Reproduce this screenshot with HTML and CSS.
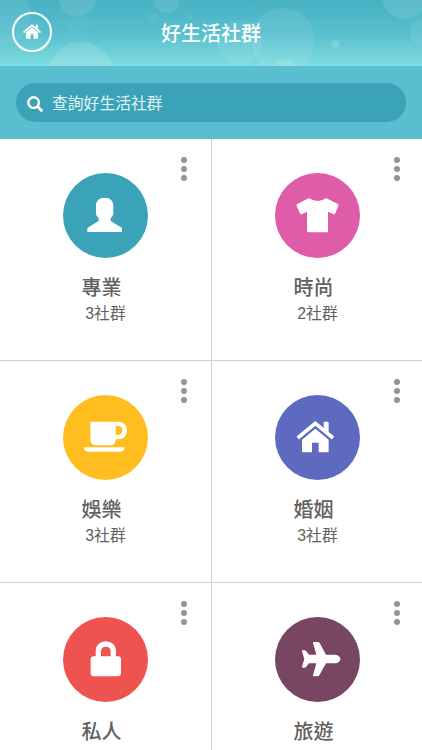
FILE: index.html
```html
<!DOCTYPE html>
<html lang="zh-Hant">
<head>
    <meta charset="UTF-8">
    <meta name="viewport" content="width=device-width, initial-scale=1.0">
    <title>好生活社群</title>
    <link rel="stylesheet" href="styles.css">
</head>
<body>
    <header class="header">
        <svg class="bubbles" viewBox="0 0 422 66" fill="#fff">
            <circle cx="0" cy="15" r="31" opacity=".07"/>
            <circle cx="77" cy="-3" r="19" opacity=".1"/>
            <circle cx="78" cy="27" r="11" opacity=".03"/>
            <circle cx="81" cy="75" r="33" opacity=".13"/>
            <circle cx="167" cy="0" r="13" opacity=".1"/>
            <circle cx="154" cy="18" r="5" opacity=".06"/>
            <circle cx="190" cy="17" r="2.5" opacity=".08"/>
            <circle cx="240" cy="42" r="22.5" opacity=".08"/>
            <circle cx="283" cy="40" r="32" opacity=".08"/>
            <circle cx="285" cy="71" r="12" opacity=".1"/>
            <circle cx="335" cy="44" r="4" opacity=".15"/>
            <circle cx="405" cy="-4" r="23" opacity=".11"/>
            <circle cx="424" cy="32" r="14" opacity=".08"/>
        </svg>
        <a class="home-button" href="#" aria-label="首頁">
            <svg class="home-icon" viewBox="62 76 118 98">
                <path d="M69 128L121 84L173 128" fill="none" stroke="#fff" stroke-width="12" stroke-linecap="round"/>
                <path d="M146 80h15v32l-15-12zM121 98l40 34v37q0 3-3 3h-27v-29h-20v29h-27q-3 0-3-3v-37z" fill="#fff"/>
            </svg>
        </a>
        <h1 class="title">好生活社群</h1>
    </header>

    <div class="search">
        <label class="search-box">
            <svg class="search-icon" viewBox="0 0 16 16" fill="none" stroke="#fff">
                <circle cx="6.6" cy="6.6" r="5.3" stroke-width="2.4"/>
                <path d="M10.600 10.600l3.800 3.800" stroke-width="2.8" stroke-linecap="round"/>
            </svg>
            <span class="search-text">查詢好生活社群</span>
        </label>
    </div>

    <main class="grid">
        <section class="card">
            <div class="menu"><i></i><i></i><i></i></div>
            <svg class="icon teal" viewBox="0 0 255 255" fill="#fff">
                <path d="M125 74c17 0 26 10 26 24v23c0 6-3 10-8 14v9l33 20q1 1 1 3v10H73v-10q0-2 1-3l33-20v-9c-5-4-8-8-8-14V98c0-14 9-24 26-24z"/>
            </svg>
            <h2 class="name">專業</h2>
            <p class="count">3社群</p>
        </section>
        <section class="card">
            <div class="menu"><i></i><i></i><i></i></div>
            <svg class="icon pink" viewBox="0 0 255 255" fill="#fff">
                <path d="M102 75q12 9 26 9t25-9l34 17q5 3 3 7l-9 22q-2 4-6 2l-16-7v58q0 4-4 4h-55q-4 0-4-4v-58l-16 8q-3 1-5-3l-10-22q-2-4 2-6z"/>
            </svg>
            <h2 class="name">時尚</h2>
            <p class="count">2社群</p>
        </section>
        <section class="card">
            <div class="menu"><i></i><i></i><i></i></div>
            <svg class="icon yellow" viewBox="0 0 255 255" fill="#fff">
                <path fill-rule="evenodd" d="M85 80h81c16 0 26 11 26 26s-10 27-26 27h-8c0 12-6 18-18 18h-40c-12 0-18-6-18-18V83q0-3 3-3zM158 93v27h7c9 0 13-6 13-14s-4-13-13-13z"/>
                <path d="M63 157h122c0 9-4 13-12 13H76c-9 0-13-4-13-13z"/>
            </svg>
            <h2 class="name">娛樂</h2>
            <p class="count">3社群</p>
        </section>
        <section class="card">
            <div class="menu"><i></i><i></i><i></i></div>
            <svg class="icon indigo" viewBox="0 0 255 255" fill="#fff">
                <path d="M68 129L121 85L174 129" fill="none" stroke="#fff" stroke-width="11"/>
                <path d="M146 83q0-3 3-3h9q3 0 3 3v30l-15-12zM121 101l40 33v35q0 3-3 3h-27v-29h-20v29h-27q-3 0-3-3v-35z"/>
            </svg>
            <h2 class="name">婚姻</h2>
            <p class="count">3社群</p>
        </section>
        <section class="card">
            <div class="menu"><i></i><i></i><i></i></div>
            <svg class="icon red" viewBox="0 0 255 255" fill="#fff">
                <rect x="83" y="118" width="91" height="60" rx="9"/>
                <path d="M106 122V104c0-15 9-23 22.500-23s22.500 8 22.500 23v18" fill="none" stroke="#fff" stroke-width="16"/>
            </svg>
            <h2 class="name">私人</h2>
        </section>
        <section class="card">
            <div class="menu"><i></i><i></i><i></i></div>
            <svg class="icon plum" viewBox="0 0 255 255" fill="#fff">
                <path d="M116 75h13q3 0 5 3l19 35h25c12 0 18 7 18 13s-6 13-18 13h-25l-20 36q-2 3-5 3h-12q-3 0-2-3l10-36h-22l-9 11q-2 2-5 2h-5q-3 0-2-3l6-20q1-3 0-6l-6-20q-1-3 2-3h5q3 0 5 2l9 11h22l-10-35q-1-3 2-3z"/>
            </svg>
            <h2 class="name">旅遊</h2>
        </section>
    </main>
</body>
</html>
```

FILE: styles.css
```css
:root {
    --line-color: #d0d0d0;
    --text-color: #616161;
}

* {
    margin: 0;
    padding: 0;
    box-sizing: border-box;
}

body {
    background: #fff;
    color: var(--text-color);
    font-family: "Liberation Sans", "Noto Sans CJK TC", sans-serif;
}

.header {
    position: relative;
    display: flex;
    align-items: center;
    justify-content: center;
    height: 66px;
    background: linear-gradient(#48b1c3, #57bfcd 50%, #80dce1);
}

.bubbles {
    position: absolute;
    inset: 0;
    width: 422px;
    height: 66px;
}

.home-button {
    position: absolute;
    left: 12px;
    top: 12px;
    display: flex;
    align-items: center;
    justify-content: center;
    width: 40px;
    height: 40px;
    border: 2px solid #fff;
    border-radius: 50%;
}

.home-icon {
    width: 18px;
    height: 15px;
    margin: 0 1px 2px 0;
}

.title {
    position: relative;
    padding-top: 2px;
    font-size: 20px;
    font-weight: 500;
    line-height: 30px;
    color: #fff;
}

.search {
    height: 73px;
    padding: 17px 16px 0;
    background: #59becd;
}

.search-box {
    display: flex;
    align-items: center;
    height: 39px;
    padding-left: 11px;
    border-radius: 20px;
    background: #3aa3b7;
}

.search-icon {
    width: 16px;
    height: 16px;
    margin-top: 2px;
}

.search-text {
    margin-left: 9px;
    padding-top: 2px;
    font-size: 15.8px;
    line-height: 24px;
    color: #e4f6f9;
}

.grid {
    display: grid;
    grid-template-columns: 212px 210px;
    grid-template-rows: 222px 222px 167px;
}

.card {
    position: relative;
    display: flex;
    flex-direction: column;
    align-items: center;
    padding-top: 34px;
}

.card:nth-child(-n+4) {
    border-bottom: 1px solid var(--line-color);
}

.card:nth-child(odd) {
    border-right: 1px solid var(--line-color);
}

.card:nth-child(even) {
    padding-left: 1px;
}

.menu {
    position: absolute;
    left: 181px;
    top: 18px;
    display: flex;
    flex-direction: column;
    gap: 3px;
}

.menu i {
    width: 6px;
    height: 6px;
    border-radius: 50%;
    background: #949494;
}

.card:nth-child(even) .menu {
    left: 181.6px;
}

.icon {
    flex: none;
    width: 85px;
    height: 85px;
    border-radius: 50%;
}

.teal { background: #3aa3b7; }
.pink { background: #df5ca8; }
.yellow { background: #ffbd20; }
.indigo { background: #5d6abf; }
.red { background: #ef5350; }
.plum { background: #784563; }

.name {
    margin: 15px 8px 0 0;
    font-size: 20px;
    font-weight: 500;
    line-height: 30px;
}

.count {
    margin-top: -1px;
    font-size: 15.8px;
    line-height: 24px;
}
```
